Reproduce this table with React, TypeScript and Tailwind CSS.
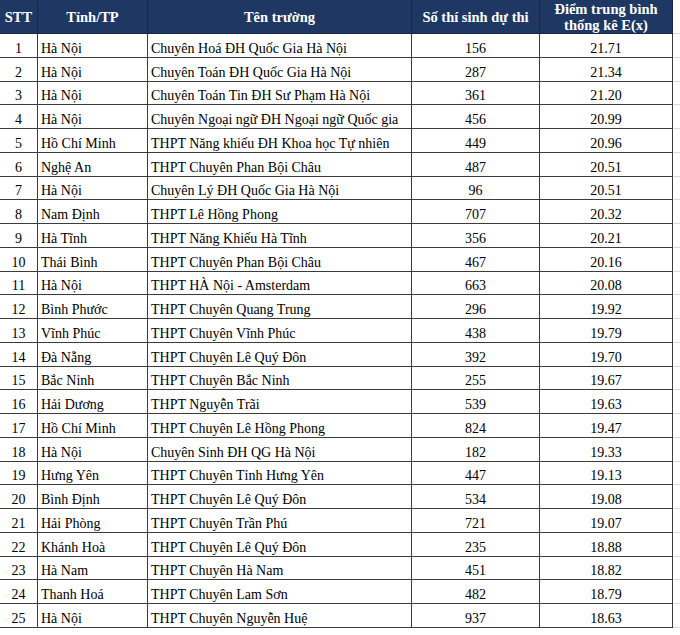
const rows: [number, string, string, number, string][] = [
  [1, "Hà Nội", "Chuyên Hoá ĐH Quốc Gia Hà Nội", 156, "21.71"],
  [2, "Hà Nội", "Chuyên Toán ĐH Quốc Gia Hà Nội", 287, "21.34"],
  [3, "Hà Nội", "Chuyên Toán Tin ĐH Sư Phạm Hà Nội", 361, "21.20"],
  [4, "Hà Nội", "Chuyên Ngoại ngữ ĐH Ngoại ngữ Quốc gia", 456, "20.99"],
  [5, "Hồ Chí Minh", "THPT Năng khiếu ĐH Khoa học Tự nhiên", 449, "20.96"],
  [6, "Nghệ An", "THPT Chuyên Phan Bội Châu", 487, "20.51"],
  [7, "Hà Nội", "Chuyên Lý ĐH Quốc Gia Hà Nội", 96, "20.51"],
  [8, "Nam Định", "THPT Lê Hồng Phong", 707, "20.32"],
  [9, "Hà Tĩnh", "THPT Năng Khiếu Hà Tĩnh", 356, "20.21"],
  [10, "Thái Bình", "THPT Chuyên Phan Bội Châu", 467, "20.16"],
  [11, "Hà Nội", "THPT HÀ Nội - Amsterdam", 663, "20.08"],
  [12, "Bình Phước", "THPT Chuyên Quang Trung", 296, "19.92"],
  [13, "Vĩnh Phúc", "THPT Chuyên Vĩnh Phúc", 438, "19.79"],
  [14, "Đà Nẵng", "THPT Chuyên Lê Quý Đôn", 392, "19.70"],
  [15, "Bắc Ninh", "THPT Chuyên Bắc Ninh", 255, "19.67"],
  [16, "Hải Dương", "THPT Nguyễn Trãi", 539, "19.63"],
  [17, "Hồ Chí Minh", "THPT Chuyên Lê Hồng Phong", 824, "19.47"],
  [18, "Hà Nội", "Chuyên Sinh ĐH QG Hà Nội", 182, "19.33"],
  [19, "Hưng Yên", "THPT Chuyên Tỉnh Hưng Yên", 447, "19.13"],
  [20, "Bình Định", "THPT Chuyên Lê Quý Đôn", 534, "19.08"],
  [21, "Hải Phòng", "THPT Chuyên Trần Phú", 721, "19.07"],
  [22, "Khánh Hoà", "THPT Chuyên Lê Quý Đôn", 235, "18.88"],
  [23, "Hà Nam", "THPT Chuyên Hà Nam", 451, "18.82"],
  [24, "Thanh Hoá", "THPT Chuyên Lam Sơn", 482, "18.79"],
  [25, "Hà Nội", "THPT Chuyên Nguyễn Huệ", 937, "18.63"],
];

const cols = "grid grid-cols-[38px_110px_264px_128px_133px_1fr]";

export default function App() {
  return (
    <div
      className="w-[680px] h-[635px] bg-white text-black overflow-hidden"
      style={{ fontFamily: '"Liberation Serif", "Times New Roman", serif' }}
    >
      {/* header */}
      <div className={`${cols} h-[34px] text-white font-bold text-[14.5px] leading-[16px]`}>
        <div className="bg-[#1f3763] border-r border-b border-[#16284a] flex items-center justify-center">
          STT
        </div>
        <div className="bg-[#1f3763] border-r border-b border-[#16284a] flex items-center justify-center">
          Tỉnh/TP
        </div>
        <div className="bg-[#1f3763] border-r border-b border-[#16284a] flex items-center justify-center">
          Tên trường
        </div>
        <div className="bg-[#1f3763] border-r border-b border-[#16284a] flex items-center justify-center">
          Số thí sinh dự thi
        </div>
        <div className="bg-[#1f3763] border-r border-b border-[#16284a] flex flex-col items-center justify-center text-center">
          <span>Điểm trung bình</span>
          <span>thống kê E(x)</span>
        </div>
        <div className="border-b border-[#d9d9d9]" />
      </div>

      {/* body */}
      {rows.map(([stt, tinh, truong, so, diem]) => (
        <div key={stt} className={`${cols} h-[23.75px] text-[14px] leading-none`}>
          <div className="border-r border-b border-[#3c3c3c] flex items-end justify-center pb-[1px]">
            {stt}
          </div>
          <div className="border-r border-b border-[#3c3c3c] flex items-end pl-[3px] pb-[1px] whitespace-nowrap">
            {tinh}
          </div>
          <div className="border-r border-b border-[#3c3c3c] flex items-end pl-[3px] pb-[1px] whitespace-nowrap overflow-hidden">
            {truong}
          </div>
          <div className="border-r border-b border-[#3c3c3c] flex items-end justify-center pb-[1px]">
            {so}
          </div>
          <div className="border-r border-b border-[#3c3c3c] flex items-end justify-center pb-[1px]">
            {diem}
          </div>
          <div className="border-b border-[#d9d9d9]" />
        </div>
      ))}
    </div>
  );
}
